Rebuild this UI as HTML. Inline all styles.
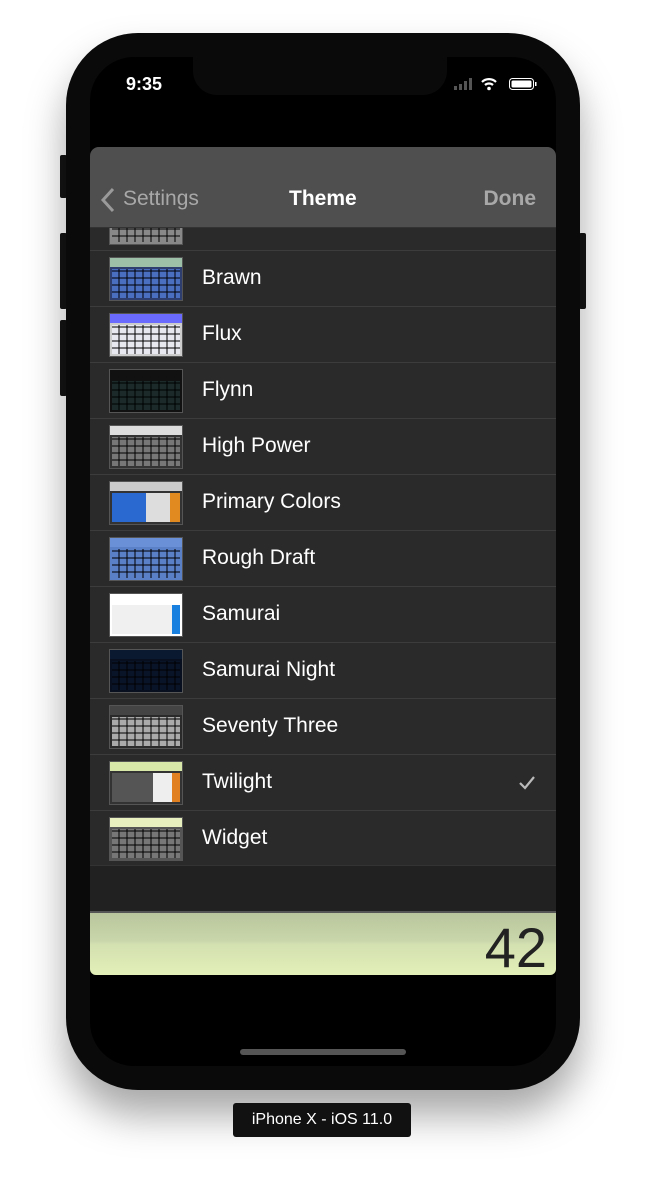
<!DOCTYPE html>
<html><head><meta charset="utf-8"><style>
*{margin:0;padding:0;box-sizing:border-box}
body{width:645px;height:1182px;background:#fff;position:relative;overflow:hidden;font-family:"Liberation Sans",sans-serif}
.phone{position:absolute;left:66px;top:33px;width:514px;height:1057px;background:#0a0a0a;border-radius:72px;box-shadow:0 25px 40px rgba(0,0,0,.35)}
.btn{position:absolute;background:#141414;width:7px;border-radius:2px}
.screen{position:absolute;left:90px;top:57px;width:466px;height:1009px;background:#000;border-radius:44px;overflow:hidden}
.notch{position:absolute;left:103px;top:0;width:254px;height:38px;background:#0a0a0a;border-radius:0 0 24px 24px}
.time{position:absolute;left:36px;top:17px;color:#fff;font-size:18px;font-weight:bold}
.sheet{position:absolute;left:0;top:90px;width:466px;height:828px;border-radius:9px 9px 6px 6px;overflow:hidden;background:#212121}
.nav{position:absolute;left:0;top:0;width:466px;height:80px;background:#4f4f4f;z-index:2}
.nav span{position:absolute;top:40px;font-size:21px}
.list{position:absolute;left:0;top:80px;width:466px}
.row{position:relative;height:56px;background:#2a2a2a;border-top:1px solid #3c3c3c}
.row .t{position:absolute;left:112px;top:15px;color:#fff;font-size:21px}
.th{position:absolute;left:19px;top:6px;width:74px;height:44px;border:1px solid #555;background:#3a3a3a}
.th .top{height:9px}
.th .g{position:absolute;left:2px;right:2px;top:11px;bottom:2px;background-image:repeating-linear-gradient(90deg,transparent 0 6px,rgba(0,0,0,.5) 6px 8px),repeating-linear-gradient(0deg,transparent 0 5px,rgba(0,0,0,.5) 5px 7px)}
.disp{position:absolute;left:0;top:764px;width:466px;height:64px;background:linear-gradient(#b9c69d,#c9d6ab 45%,#d3e0b0 50%,#e3f0b8);border-top:2px solid #555}
.disp span{position:absolute;right:9px;top:2px;font-size:56px;color:#222}
</style></head><body>
<div class="btn" style="left:60px;top:155px;height:43px"></div>
<div class="btn" style="left:60px;top:233px;height:76px"></div>
<div class="btn" style="left:60px;top:320px;height:76px"></div>
<div class="btn" style="left:579px;top:233px;height:76px"></div>
<div class="phone"></div>
<div class="screen">
<div class="notch"></div>
<div class="time">9:35</div>
<svg style="position:absolute;left:364px;top:20px" width="86" height="16">
<rect x="0" y="9" width="3" height="4" fill="#555"/><rect x="5" y="7" width="3" height="6" fill="#555"/><rect x="10" y="4" width="3" height="9" fill="#555"/><rect x="15" y="1" width="3" height="12" fill="#555"/>
<path d="M28 5a10 10 0 0 1 14 0M31 8a6 6 0 0 1 8 0" stroke="#fff" stroke-width="2.2" fill="none"/><circle cx="35" cy="11.5" r="1.8" fill="#fff"/>
<rect x="55.5" y="1.5" width="24" height="11" rx="3" fill="none" stroke="#fff" stroke-width="1"/><rect x="57.5" y="3.5" width="20" height="7" rx="1.5" fill="#fff"/><rect x="81" y="5" width="1.5" height="4" fill="#fff"/>
</svg>
<div class="sheet">
<div class="nav">
<svg style="position:absolute;left:10px;top:40px" width="16" height="26"><path d="M13 2L3 13l10 11" stroke="#9a9a9a" stroke-width="3" fill="none"/></svg>
<span style="left:33px;color:#a8a8a8">Settings</span>
<span style="left:199px;color:#fff;font-weight:bold">Theme</span>
<span style="right:20px;color:#a8a8a8;font-weight:bold">Done</span>
</div>
<div class="list" style="top:47px">
<div class="row"><div class="th" style="background:#888"><div class="top" style="background:#999"></div><div class="g"></div></div><span class="t">Blue Sun</span></div>
<div class="row"><div class="th" style="background:#2e3e6e"><div class="top" style="background:#9cc0a8"></div><div class="g" style="background-color:#4a6fc0"></div></div><span class="t">Brawn</span></div>
<div class="row"><div class="th" style="background:#ccc"><div class="top" style="background:#6a6aff"></div><div class="g" style="background-color:#e8e8f0"></div></div><span class="t">Flux</span></div>
<div class="row"><div class="th" style="background:#111"><div class="top" style="background:#111"></div><div class="g" style="background-color:#1c2a2a"></div></div><span class="t">Flynn</span></div>
<div class="row"><div class="th" style="background:#333"><div class="top" style="background:#ddd"></div><div class="g" style="background-color:#777"></div></div><span class="t">High Power</span></div>
<div class="row"><div class="th" style="background:#333"><div class="top" style="background:#ccc"></div><div class="g" style="background:linear-gradient(90deg,#2a6ad0 50%,#ddd 50% 85%,#e08a20 85%)"></div></div><span class="t">Primary Colors</span></div>
<div class="row"><div class="th" style="background:#5a80c8"><div class="top" style="background:#6a90d8"></div><div class="g" style="background-color:#5a80c8"></div></div><span class="t">Rough Draft</span></div>
<div class="row"><div class="th" style="background:#fff"><div class="top" style="background:#fff"></div><div class="g" style="background:linear-gradient(90deg,#f0f0f0 88%,#1a80e0 88%)"></div></div><span class="t">Samurai</span></div>
<div class="row"><div class="th" style="background:#081020"><div class="top" style="background:#0a1830"></div><div class="g" style="background-color:#0a1428"></div></div><span class="t">Samurai Night</span></div>
<div class="row"><div class="th" style="background:#2a2a2a"><div class="top" style="background:#444"></div><div class="g" style="background-color:#aaa"></div></div><span class="t">Seventy Three</span></div>
<div class="row"><div class="th" style="background:#333"><div class="top" style="background:#d8e8a8"></div><div class="g" style="background:linear-gradient(90deg,#555 60%,#eee 60% 88%,#e08020 88%)"></div></div><span class="t">Twilight</span>
<svg style="position:absolute;left:428px;top:20px" width="18" height="16"><path d="M2 8l5 5 9-11" stroke="#bbb" stroke-width="2.2" fill="none"/></svg></div>
<div class="row" style="border-bottom:1px solid #333"><div class="th" style="background:#555"><div class="top" style="background:#e8f0c0"></div><div class="g" style="background-color:#777"></div></div><span class="t">Widget</span></div>
</div>
<div class="nav" style="height:1px;top:80px;background:#333"></div>
<div class="disp"><span>42</span></div>
</div>
<div style="position:absolute;left:150px;top:992px;width:166px;height:6px;border-radius:3px;background:#555"></div>
</div>
<div style="position:absolute;left:233px;top:1103px;width:178px;height:34px;background:#111;border-radius:3px;color:#fff;font-size:16px;text-align:center;line-height:34px">iPhone X - iOS 11.0</div>
</body></html>
